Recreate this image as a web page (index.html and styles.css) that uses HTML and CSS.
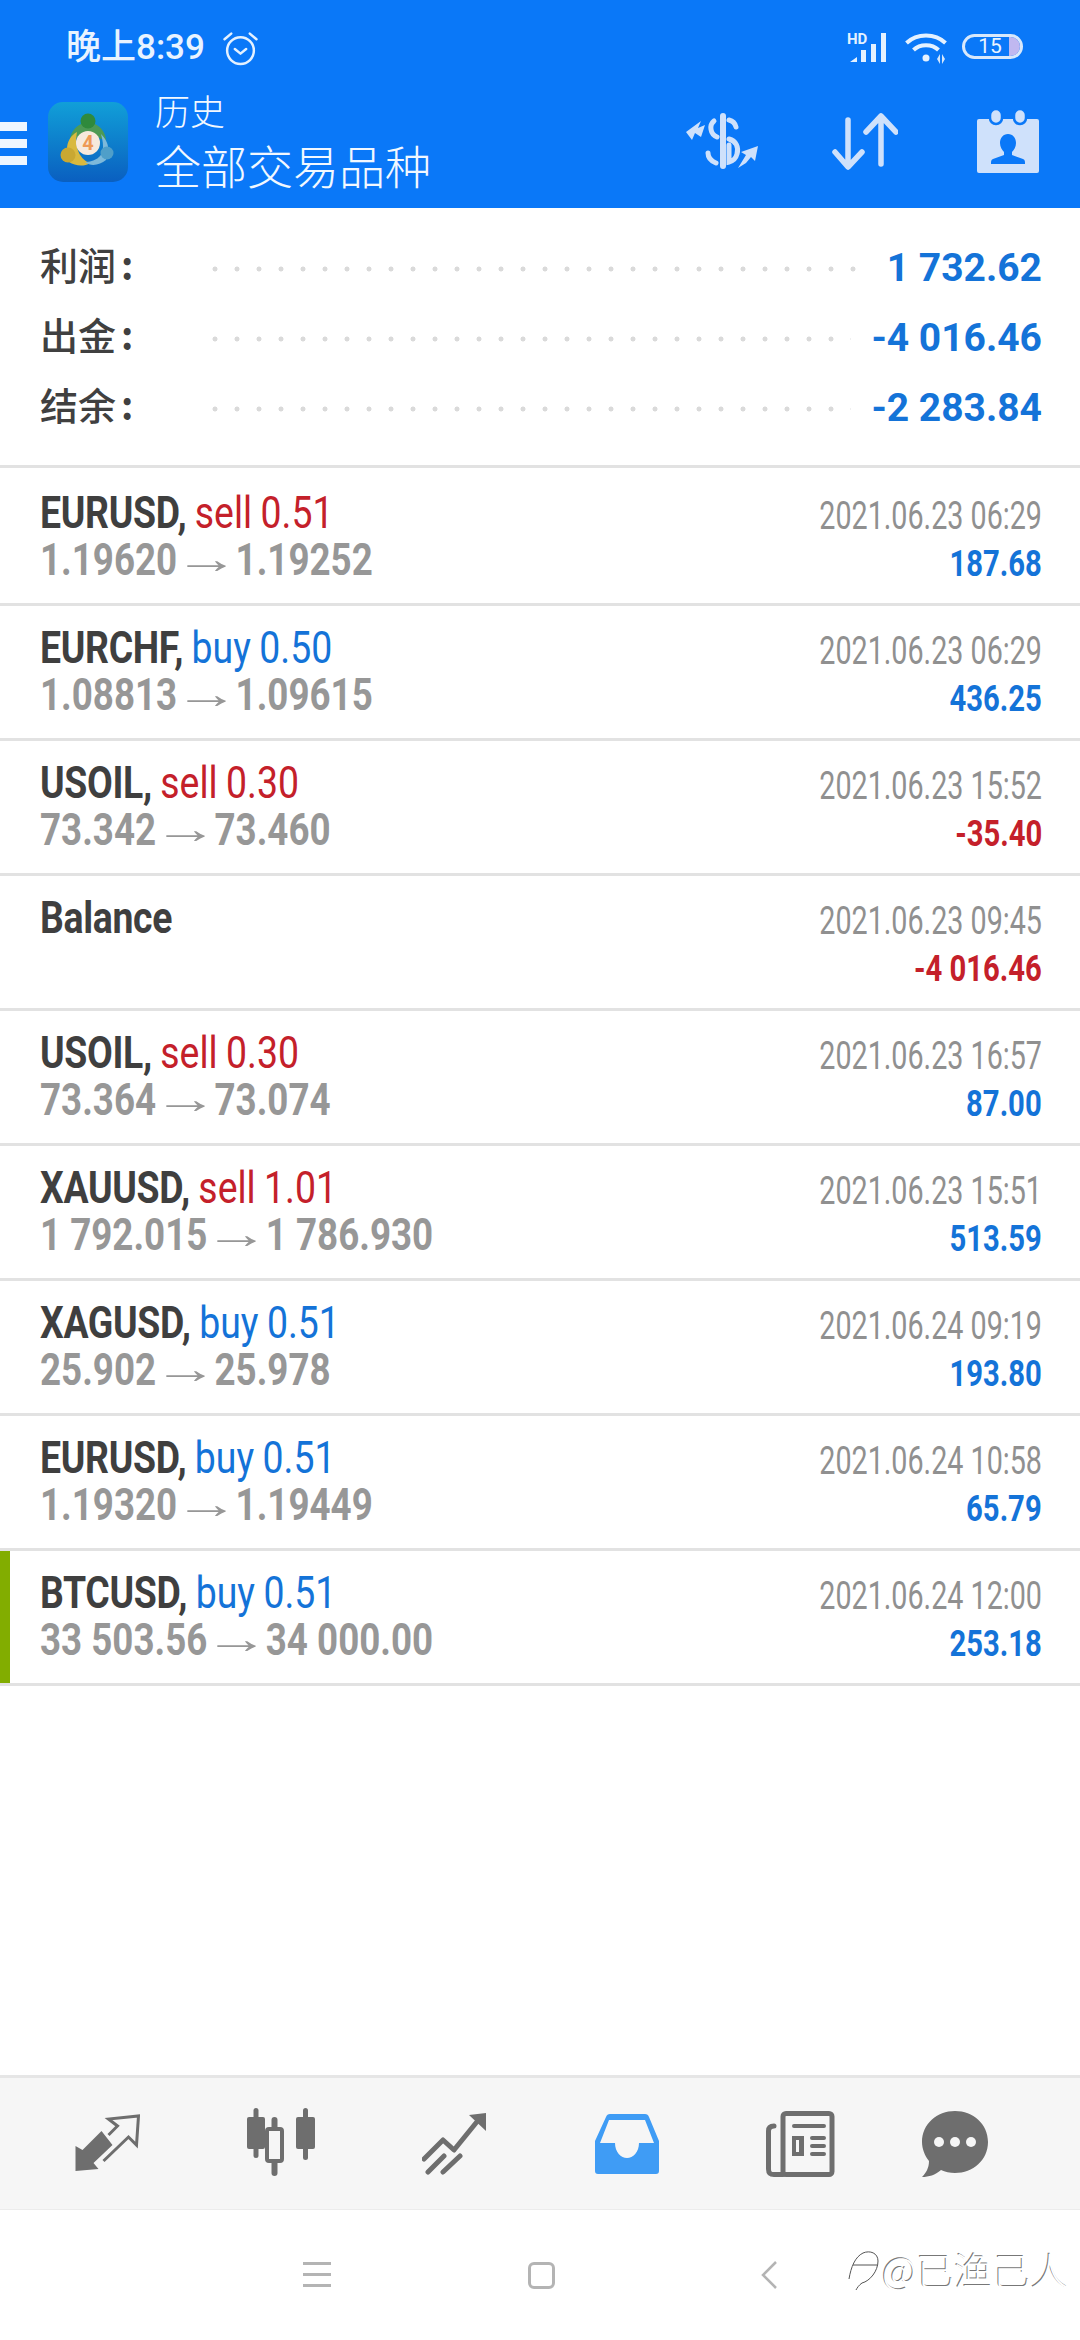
FILE: index.html
```html
<!DOCTYPE html>
<html lang="zh">
<head>
<meta charset="utf-8">
<title>历史</title>
<link rel="stylesheet" href="styles.css">
</head>
<body>
<div class="screen">
  <header class="header">
    <div class="status">
      <span class="clock">晚上8:39</span>
      <svg class="alarm" viewBox="0 0 34 34"><g fill="none" stroke="#e4f1ff" stroke-width="2.4" stroke-linecap="round" stroke-linejoin="round"><circle cx="17" cy="19" r="13"/><path d="M1.5 8 8 2.5M32.500 8 26 2.500M11.500 17.500 17 22l5.500-4.500"/></g></svg>
      <div class="status-right">
        <div class="signal"><span class="hd">HD</span><svg class="bars" viewBox="0 0 42 30"><path fill="#e4f1ff" d="M2 29 9 24v5zM13 17h5v12h-5zM23 11h5v18h-5zM33 0h5v29h-5z"/></svg></div>
        <svg class="wifi" viewBox="0 0 44 34"><g fill="none" stroke="#e4f1ff" stroke-width="4"><path d="M1.500 11C12 1 30 1 40.500 11"/><path d="M8.500 18C15 11.500 27 11.500 33.500 18"/></g><circle cx="21" cy="26" r="3.500" fill="#e4f1ff"/><path fill="#d4e6fb" d="M35 22v10l-3-5zM37 22v10l3-5z"/></svg>
        <div class="battery"><span class="battery-num">15</span><span class="battery-level"></span></div>
      </div>
    </div>
    <div class="toolbar">
      <div class="burger"><i></i><i></i><i></i></div>
      <svg class="logo" viewBox="0 0 80 80">
        <defs><linearGradient id="lg" x1="0" y1="0" x2="0" y2="1"><stop offset="0" stop-color="#119fd8"/><stop offset="1" stop-color="#0a5fc0"/></linearGradient></defs>
        <rect width="80" height="80" rx="15" fill="url(#lg)"/>
        <path fill="#4d9a55" d="M33 22C27 25 22 31 22 39L35 33H45L58 39C58 31 53 25 47 22z"/>
        <circle cx="40" cy="19" r="7.500" fill="#2f8a3c"/>
        <path fill="#d9b93e" d="M29 30C23 33 19 40 19 47L21 60C27 64 36 65 42 61 33 58 26 47 29 30z"/>
        <circle cx="20" cy="53" r="7.500" fill="#c9a832"/>
        <path fill="#7db9da" d="M53 32C58 37 61 43 60 49L58 58C52 63 43 65 37 60 46 60 56 55 55 44 55 40 54 36 53 32z"/>
        <circle cx="59" cy="51" r="6.500" fill="#4f9fc9"/>
        <circle cx="40" cy="41" r="12" fill="#f6e9dc"/>
        <text x="40" y="48" class="logo-four">4</text>
      </svg>
      <div class="titles">
        <div class="title-small">历史</div>
        <div class="title-big">全部交易品种</div>
      </div>
      <div class="actions">
        <svg class="act-money" viewBox="0 0 72 56"><g fill="#cfe1fb"><rect x="34" y="0" width="6" height="56" rx="3"/><path d="M0 19 15 8 12 15 19 12 15 24 9 20 6 27z"/><path d="M72 33 55 39 60 42 52 55 60 50 65 44 69 48z"/></g><g fill="none" stroke="#cfe1fb" stroke-width="5" stroke-linecap="round"><path d="M43 7c4 1 6 3 7 7M28 8c-5 4-4 13 3 16M43 26c7 2 10 8 8 15-1 4-4 7-8 8V32M22 40c0 4 3 8 8 10"/></g></svg>
        <svg class="act-sort" viewBox="0 0 66 58"><g fill="none" stroke="#cfe1fb" stroke-width="5.500" stroke-linecap="round" stroke-linejoin="round"><path d="M16 8V54M3 40 16 55 30 40M49 4V52M34 20 49 4 64 20"/></g></svg>
        <svg class="act-cal" viewBox="0 0 62 64"><rect x="0" y="10" width="62" height="54" rx="2" fill="#cfe1fb"/><g fill="#cfe1fb" stroke="#0a78f8" stroke-width="2.500"><rect x="13" y="0" width="12" height="15" rx="6"/><rect x="37" y="0" width="12" height="15" rx="6"/></g><path fill="#0a78f8" d="M31 25c5 0 8 4 8 9 0 4-2 7-4 9v3l11 4c2 1 2 2 2 5H14c0-3 0-4 2-5l11-4v-3c-2-2-4-5-4-9 0-5 3-9 8-9z"/></svg>
      </div>
    </div>
  </header>

  <section class="summary">
    <div class="sum-row"><span class="sum-label">利润<span class="colon">:</span></span><span class="leader"></span><span class="sum-value">1 732.62</span></div>
    <div class="sum-row"><span class="sum-label">出金<span class="colon">:</span></span><span class="leader"></span><span class="sum-value">-4 016.46</span></div>
    <div class="sum-row"><span class="sum-label">结余<span class="colon">:</span></span><span class="leader"></span><span class="sum-value">-2 283.84</span></div>
  </section>

  <section class="deals">
    <article class="deal">
      <div class="col-left"><div class="line-a"><b class="sym">EURUSD,</b> <span class="sell">sell 0.51</span></div><div class="line-b">1.19620<span class="arrow">→</span>1.19252</div></div>
      <div class="col-right"><div class="date">2021.06.23 06:29</div><div class="profit">187.68</div></div>
    </article>
    <article class="deal">
      <div class="col-left"><div class="line-a"><b class="sym">EURCHF,</b> <span class="buy">buy 0.50</span></div><div class="line-b">1.08813<span class="arrow">→</span>1.09615</div></div>
      <div class="col-right"><div class="date">2021.06.23 06:29</div><div class="profit">436.25</div></div>
    </article>
    <article class="deal">
      <div class="col-left"><div class="line-a"><b class="sym">USOIL,</b> <span class="sell">sell 0.30</span></div><div class="line-b">73.342<span class="arrow">→</span>73.460</div></div>
      <div class="col-right"><div class="date">2021.06.23 15:52</div><div class="profit loss">-35.40</div></div>
    </article>
    <article class="deal">
      <div class="col-left"><div class="line-a"><b class="sym">Balance</b></div></div>
      <div class="col-right"><div class="date">2021.06.23 09:45</div><div class="profit loss">-4 016.46</div></div>
    </article>
    <article class="deal">
      <div class="col-left"><div class="line-a"><b class="sym">USOIL,</b> <span class="sell">sell 0.30</span></div><div class="line-b">73.364<span class="arrow">→</span>73.074</div></div>
      <div class="col-right"><div class="date">2021.06.23 16:57</div><div class="profit">87.00</div></div>
    </article>
    <article class="deal">
      <div class="col-left"><div class="line-a"><b class="sym">XAUUSD,</b> <span class="sell">sell 1.01</span></div><div class="line-b">1 792.015<span class="arrow">→</span>1 786.930</div></div>
      <div class="col-right"><div class="date">2021.06.23 15:51</div><div class="profit">513.59</div></div>
    </article>
    <article class="deal">
      <div class="col-left"><div class="line-a"><b class="sym">XAGUSD,</b> <span class="buy">buy 0.51</span></div><div class="line-b">25.902<span class="arrow">→</span>25.978</div></div>
      <div class="col-right"><div class="date">2021.06.24 09:19</div><div class="profit">193.80</div></div>
    </article>
    <article class="deal">
      <div class="col-left"><div class="line-a"><b class="sym">EURUSD,</b> <span class="buy">buy 0.51</span></div><div class="line-b">1.19320<span class="arrow">→</span>1.19449</div></div>
      <div class="col-right"><div class="date">2021.06.24 10:58</div><div class="profit">65.79</div></div>
    </article>
    <article class="deal deal-active">
      <div class="col-left"><div class="line-a"><b class="sym">BTCUSD,</b> <span class="buy">buy 0.51</span></div><div class="line-b">33 503.56<span class="arrow">→</span>34 000.00</div></div>
      <div class="col-right"><div class="date">2021.06.24 12:00</div><div class="profit">253.18</div></div>
    </article>
  </section>

  <div class="spacer"></div>

  <nav class="tabs">
    <svg class="t1" viewBox="0 0 64 59"><path fill="#6e6e6e" d="M0 32V57L23 55 18 49 37 31 26 17 7 36z"/><path fill="none" stroke="#6e6e6e" stroke-width="3" d="M28 47 53 23 61 31 63 2 33 5 42 12 33 21"/></svg>
    <svg class="t2" viewBox="0 0 68 68"><g fill="#6e6e6e"><rect x="0" y="9" width="18" height="32" rx="2"/><rect x="6.500" y="0" width="5" height="50" rx="2.500"/><rect x="49" y="9" width="19" height="32" rx="2"/><rect x="56" y="0" width="5" height="52" rx="2.500"/><rect x="24.500" y="9" width="6" height="59" rx="3"/></g><rect x="20" y="21" width="15" height="32" rx="2" fill="#f6f6f6" stroke="#6e6e6e" stroke-width="4"/></svg>
    <svg class="t3" viewBox="0 0 64 62"><g fill="none" stroke="#6e6e6e" stroke-width="5" stroke-linecap="round" stroke-linejoin="round"><path d="M2 46 21 27 32 37 58 5M6 59 22 43M21 59 38 43"/></g><path fill="#6e6e6e" d="M47 2 64 0V18z"/></svg>
    <svg class="t4" viewBox="0 0 64 62"><path fill="#3f9cf5" d="M15 1H50Q53 1 54 4L64 28V58Q64 61 61 61H3Q0 61 0 58V28L11 4Q12 1 15 1z"/><path fill="#f6f6f6" d="M14 7H50L59 30H44C44 39 38 45 32 45S20 39 20 30H5z"/></svg>
    <svg class="t5" viewBox="0 0 69 66"><g fill="none" stroke="#6e6e6e" stroke-linecap="round"><rect x="17" y="2.500" width="49" height="61" rx="3" stroke-width="5"/><path stroke-width="5" d="M8 15C4 15 2.500 17 2.500 20V58C2.500 62 4 63.500 8 63.500H17"/><path stroke-width="4" d="M28 15H58M46 27H58M46 35H58M46 43H58"/></g><rect x="26" y="25" width="12" height="20" fill="#6e6e6e"/><rect x="30" y="29" width="3" height="12" fill="#f6f6f6"/></svg>
    <svg class="t6" viewBox="0 0 66 66"><path fill="#6e6e6e" d="M33 0C51 0 66 13 66 31S51 62 33 62C28 62 23 61 19 59 13 64 7 66 0 66 4 62 7 57 7 50 3 45 0 38 0 31 0 13 15 0 33 0z"/><g fill="#f6f6f6"><circle cx="17" cy="31" r="5"/><circle cx="33" cy="31" r="5"/><circle cx="49" cy="31" r="5"/></g></svg>
  </nav>

  <div class="navbar">
    <div class="nav-menu"><i></i><i></i><i></i></div>
    <div class="nav-home"></div>
    <svg class="nav-back" viewBox="0 0 16 28"><path fill="none" stroke="#b4b4b4" stroke-width="2.500" d="M15 1 2 14 15 27"/></svg>
    <div class="watermark">
      <svg class="wm-icon" viewBox="0 0 32 44"><g fill="none" stroke="#555" stroke-width="1"><path d="M1 32C3 20 7 10 15 6 22 3 30 6 30 14 30 24 22 34 14 36 11 38 9 41 8 43"/><path d="M5 18H30"/></g></svg>
      <span class="wm-text">@已渔己人</span>
    </div>
  </div>
</div>
</body>
</html>
```
FILE: styles.css
```css
* { box-sizing: border-box; }
html, body { margin: 0; padding: 0; background: #fff; }
body { font-family: Roboto, "Noto Sans CJK SC", sans-serif; }
.screen { width: 1080px; height: 2340px; display: flex; flex-direction: column; overflow: hidden; background: #fff; position: relative; }

.header { height: 208px; background: #0a78f8; color: #f2f8ff; flex: none; }
.status { height: 90px; display: flex; align-items: flex-start; padding: 30px 57px 0 66px; }
.clock { font: 500 35px/36px Roboto, "Noto Sans CJK SC", sans-serif; color: #e8f3ff; }
.alarm { width: 35px; height: 35px; margin-left: 18px; margin-top: 1px; }
.status-right { margin-left: auto; display: flex; align-items: flex-start; }
.signal { width: 44px; height: 30px; margin-top: 3px; position: relative; }
.bars { display: block; width: 44px; height: 30px; }
.hd { position: absolute; left: 0; top: -2px; font: 700 15px/16px Roboto, sans-serif; color: #e4f1ff; }
.wifi { width: 44px; height: 34px; margin-left: 14px; margin-top: 2px; }
.battery { width: 61px; height: 25px; margin-left: 13px; margin-top: 4px; border: 3px solid #d8e8fb; border-radius: 13px; display: flex; overflow: hidden; background: #0a78f8; }
.battery-num { flex: 1; font: 400 21px/19px Roboto, sans-serif; color: #e8f3ff; text-align: center; padding-left: 6px; }
.battery-level { width: 11px; background: #c0b8f0; }

.toolbar { display: flex; align-items: flex-start; height: 118px; }
.burger { width: 27px; margin-top: 32px; margin-right: 21px; display: flex; flex-direction: column; gap: 8px; }
.burger i { display: block; height: 9px; background: #eef6ff; }
.logo { width: 80px; height: 80px; margin-top: 12px; margin-right: 27px; flex: none; }
.logo-four { font: 700 20px Roboto, sans-serif; fill: #ee9a55; text-anchor: middle; }
.titles { display: flex; flex-direction: column; color: #f2f8ff; font-family: "Noto Sans CJK SC", sans-serif; font-weight: 300; }
.title-small { font-size: 35px; line-height: 40px; }
.title-big { font-size: 46px; line-height: 58px; margin-top: 5px; }
.actions { margin-left: auto; display: flex; align-items: flex-start; padding-right: 41px; }
.act-money { width: 72px; height: 56px; margin-top: 23px; }
.act-sort { width: 66px; height: 58px; margin-left: 74px; margin-top: 22px; }
.act-cal { width: 62px; height: 64px; margin-left: 79px; margin-top: 19px; }

.summary { height: 257px; padding: 23px 38px 24px 40px; flex: none; }
.sum-row { height: 70px; display: flex; align-items: center; }
.sum-label { width: 164px; font: 500 38px/66px "Noto Sans CJK SC", sans-serif; color: #404040; flex: none; margin-bottom: 4px; }
.colon { margin-left: 5px; font-weight: 700; }
.leader { flex: 1; height: 6px; margin-top: 6px; margin-right: 20px; background-image: radial-gradient(circle, #dadada 2.2px, rgba(255,255,255,0) 2.8px); background-size: 22px 6px; background-repeat: repeat-x; }
.sum-value { font: 700 39px/66px Roboto, sans-serif; color: #1473d8; flex: none; margin-top: 4px; }

.deals { flex: none; border-top: 3px solid #e2e2e2; }
.deal { height: 135px; border-bottom: 3px solid #e2e2e2; display: flex; justify-content: space-between; padding: 18.5px 38px 0 40px; }
.deal:first-child { height: 137.5px; padding-top: 20.5px; }
.deal-active { position: relative; }
.deal-active::before { content: ""; position: absolute; left: 0; top: 0; bottom: 0; width: 10px; background: #82ad00; }
.col-left, .col-right { display: flex; flex-direction: column; white-space: nowrap; }
.line-a { font: 400 44px/48px Roboto, sans-serif; transform: scaleX(.85); transform-origin: left center; word-spacing: -1px; }
.line-b { font: 700 44px/46px Roboto, sans-serif; color: #979797; transform: scaleX(.835); transform-origin: left center; }
.arrow { font: 700 42px/46px "Liberation Sans", sans-serif; margin: 0 14px; display: inline-block; vertical-align: top; transform: translateY(-1px) scaleX(1.85); }
.sym { font-weight: 700; color: #3f3f3f; letter-spacing: -0.4px; }
.sell { color: #c4202a; }
.buy { color: #1473d8; }
.col-right { align-items: flex-end; }
.date { font: 400 38px/44px Roboto, sans-serif; color: #909090; transform: scaleX(.755); transform-origin: right center; margin-top: 5px; }
.profit { font: 700 37px/44px Roboto, sans-serif; color: #1473d8; transform: scaleX(.79); transform-origin: right center; margin-top: 4px; }
.loss { color: #c4202a; }

.spacer { flex: 1; }

.tabs { height: 135px; flex: none; background: #f6f6f6; border-top: 3px solid #e6e6e6; border-bottom: 1px solid #ececec; display: grid; grid-template-columns: repeat(4, 173px) 175px 134px; padding-left: 21px; justify-items: center; align-items: center; }
.t1 { width: 65px; height: 59px; }
.t2 { width: 70px; height: 68px; margin-top: -3px; }
.t3 { width: 64px; height: 62px; }
.t4 { width: 66px; height: 62px; }
.t5 { width: 69px; height: 66px; }
.t6 { width: 66px; height: 66px; }

.navbar { height: 130px; flex: none; display: flex; align-items: center; padding: 0 0 0 303px; position: relative; }
.nav-menu { width: 28px; display: flex; flex-direction: column; gap: 8px; margin-bottom: 2px; }
.nav-menu i { display: block; height: 3px; background: #b4b4b4; }
.nav-home { width: 27px; height: 27px; border: 3px solid #b4b4b4; border-radius: 6px; margin-left: 197px; }
.nav-back { width: 16px; height: 28px; margin-left: 206px; }
.watermark { position: absolute; left: 848px; top: 36px; display: flex; align-items: center; }
.wm-icon { width: 32px; height: 44px; }
.wm-text { font: 300 38px/46px "Noto Sans CJK SC", sans-serif; color: #fff; text-shadow: -1px -1px 0 #777; margin-left: 2px; }
```
